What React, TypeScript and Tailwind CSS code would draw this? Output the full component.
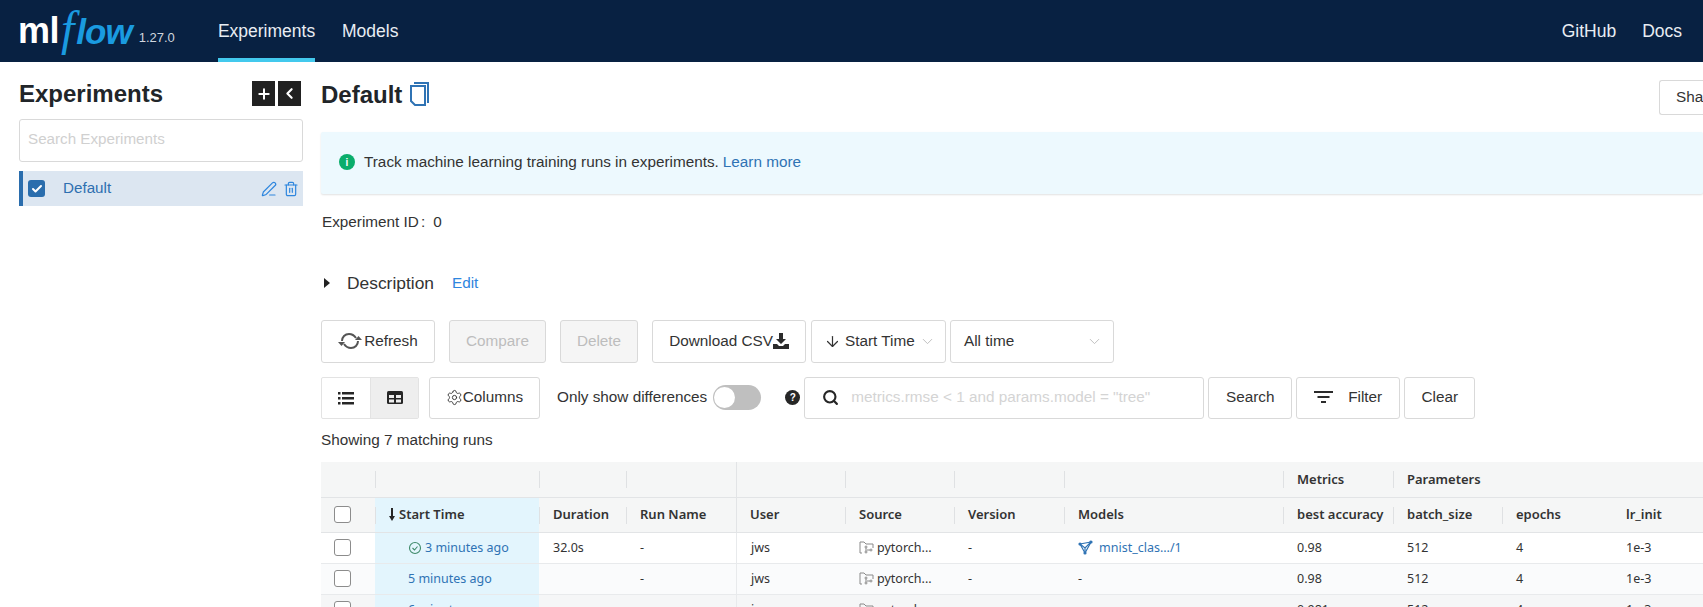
import { ChevronDown, ArrowDown, Plus, ChevronLeft, PenLine, Trash2, Search, Settings, Check } from "lucide-react";

const sans = "font-['Liberation_Sans',Arial,sans-serif]";
const tableFont = "font-['Noto_Sans',sans-serif]";

const btn = "flex h-[43px] items-center justify-center rounded-[3px] border border-[#d9d9d9] bg-white text-[15.3px] text-[#333]";
const btnDisabled = "flex h-[43px] items-center justify-center rounded-[3px] border border-[#d9d9d9] bg-[#f5f5f5] text-[15.3px] text-[#bdbdbd]";

const Logo = () => (
  <div className="flex w-[218px] items-center pl-[18px]">
    <span className="text-[36px] leading-none font-bold tracking-[-0.5px] text-white">ml</span>
    <span className="mb-[5px] ml-[2px] font-['Liberation_Serif',serif] text-[48px] leading-none text-[#1a9be0] italic">f</span>
    <span className="ml-[2px] text-[35px] leading-none font-bold tracking-[-1px] text-[#1a9be0] italic">low</span>
    <span className="mt-[13px] ml-[7px] text-[13px] text-[#cfd6de]">1.27.0</span>
  </div>
);

const Header = () => (
  <div className="flex h-[62px] shrink-0 items-stretch bg-[#082142] text-[17.5px] text-[#e8edf3]">
    <Logo />
    <div className="flex h-full w-[97px] items-center justify-center border-b-[4px] border-[#43c9ed] pt-[4px]">Experiments</div>
    <div className="ml-[27px] flex items-center">Models</div>
    <div className="ml-auto flex items-center gap-[26px] pr-[21px]">
      <span>GitHub</span>
      <span>Docs</span>
    </div>
  </div>
);

const Sidebar = () => (
  <div className="flex w-[321px] shrink-0 flex-col pt-[19px] pl-[19px]">
    <div className="flex h-[25px] w-[284px] items-center justify-between pr-[2px]">
      <span className="text-[24px] font-bold text-[#212529]">Experiments</span>
      <div className="flex gap-[3px]">
        <div className="flex h-[25px] w-[23px] items-center justify-center bg-[#212121] text-white"><Plus size={16} strokeWidth={3} /></div>
        <div className="flex h-[25px] w-[23px] items-center justify-center bg-[#212121] text-white"><ChevronLeft size={17} strokeWidth={3} /></div>
      </div>
    </div>
    <div className="mt-[13px] flex h-[43px] w-[284px] items-center rounded-[3px] border border-[#d9d9d9] px-[8px] pb-[3px] text-[15.2px] text-[#d0d0d0]">Search Experiments</div>
    <div className="mt-[9px] flex h-[35px] w-[284px] items-center border-l-[4px] border-[#2a6dad] bg-[#dce6f1] pr-[4px] pl-[5px]">
      <div className="flex h-[17px] w-[17px] items-center justify-center rounded-[3px] bg-[#2a6dad] text-white"><Check size={12} strokeWidth={4} /></div>
      <span className="ml-[18px] text-[15.2px] text-[#2e6fb0]">Default</span>
      <PenLine className="mr-[6px] ml-auto text-[#2e86de]" size={16} strokeWidth={1.800} />
      <Trash2 className="text-[#2e86de]" size={16} strokeWidth={1.800} />
    </div>
  </div>
);

const CopyIcon = () => (
  <svg width="20" height="24" viewBox="0 0 20 24" fill="none" stroke="#2f73b4" strokeWidth="2">
    <path d="M5 1h14v20" />
    <path d="M2 4h14v19H6l-4-4z" />
  </svg>
);

const RefreshIcon = () => (
  <svg width="24" height="18" viewBox="0 0 24 18" fill="none" stroke="#555" strokeWidth="2">
    <path d="M4 9c0-4 3-7 7-7 3 0 5 1 7 4" />
    <path d="M20 9c0 4-3 7-7 7-3 0-5-1-7-4" />
    <path d="M0 10h7l-3.500 4z" fill="#555" stroke="none" />
    <path d="M17 8h7l-3.500-4z" fill="#555" stroke="none" />
  </svg>
);

const DownloadIcon = () => (
  <svg width="16" height="16" viewBox="0 0 16 16" fill="#2b2b2b">
    <path d="M6 0h4v6h3l-5 5-5-5h3z" />
    <path d="M0 11h4l2 2h4l2-2h4v5H0z" />
  </svg>
);

const ListIcon = () => (
  <svg width="16" height="14" viewBox="0 0 16 14" fill="#262626">
    <rect x="0" y="1" width="2.500" height="2.500" /><rect x="4" y="1" width="12" height="2.500" />
    <rect x="0" y="6" width="2.500" height="2.500" /><rect x="4" y="6" width="12" height="2.500" />
    <rect x="0" y="11" width="2.500" height="2.500" /><rect x="4" y="11" width="12" height="2.500" />
  </svg>
);

const TableIcon = () => (
  <svg width="16" height="13" viewBox="0 0 16 13">
    <rect width="16" height="13" rx="1.500" fill="#262626" />
    <rect x="2" y="4" width="5" height="3" fill="#eee" /><rect x="9" y="4" width="5" height="3" fill="#eee" />
    <rect x="2" y="8.500" width="5" height="3" fill="#eee" /><rect x="9" y="8.500" width="5" height="3" fill="#eee" />
  </svg>
);

// triangle of nodes, same as the registered model mark
const ModelIcon = () => (
  <svg width="16" height="15" viewBox="0 0 16 15" fill="none" stroke="#2f73b4" strokeWidth="1.200">
    <path d="M2 4l11-2-6 11z" />
    <path d="M2 4l5 4 6-6M7 8v5" />
    <circle cx="2" cy="4" r="1" fill="#2f73b4" />
    <circle cx="13" cy="2" r="1" fill="#2f73b4" />
    <circle cx="7" cy="13" r="1" fill="#2f73b4" />
  </svg>
);

const SourceIcon = () => (
  <svg width="15" height="13" viewBox="0 0 15 13" fill="none" stroke="#8a8a8a" strokeWidth="1">
    <path d="M3 12H1V1h4l2 2h7v4" />
    <circle cx="7" cy="6" r="1" /><circle cx="7" cy="11" r="1" /><circle cx="12" cy="9" r="1" />
    <path d="M7 7v3M8 9h3" />
  </svg>
);

const SortArrow = () => (
  <svg width="8" height="13" viewBox="0 0 8 13" fill="#262626" className="mr-[3px] ml-[1px]">
    <rect x="3" y="0" width="2" height="9" />
    <path d="M1 8h6l-3 5z" />
  </svg>
);

const Toolbar = () => (
  <>
    <div className="mt-[25px] flex">
      <div className={`${btn} w-[114px] gap-[2px]`}><RefreshIcon />Refresh</div>
      <div className={`${btnDisabled} ml-[14px] w-[97px]`}>Compare</div>
      <div className={`${btnDisabled} ml-[14px] w-[78px]`}>Delete</div>
      <div className={`${btn} ml-[14px] w-[154px]`}>Download CSV<DownloadIcon /></div>
      <div className={`${btn} ml-[5px] w-[135px] justify-start pl-[12px]`}>
        <ArrowDown size={17} strokeWidth={1.700} />
        <span className="ml-[4px]">Start Time</span>
        <ChevronDown className="mr-[9px] ml-auto text-[#bbb]" size={17} strokeWidth={1.300} />
      </div>
      <div className={`${btn} ml-[4px] w-[164px] justify-start pl-[13px]`}>
        All time
        <ChevronDown className="mr-[10px] ml-auto text-[#bbb]" size={17} strokeWidth={1.300} />
      </div>
    </div>
    <div className="mt-[14px] flex items-center">
      <div className="flex h-[42px] w-[98px] rounded-[2px] border border-[#e3e3e3]">
        <div className="flex w-[48px] items-center justify-center"><ListIcon /></div>
        <div className="flex flex-1 items-center justify-center border-l border-[#e3e3e3] bg-[#eeeeee]"><TableIcon /></div>
      </div>
      <div className={`${btn} ml-[10px] !h-[42px] w-[111px]`}><Settings size={17} strokeWidth={1.300} />Columns</div>
      <span className="ml-[17px] text-[15.3px] text-[#333]">Only show differences</span>
      <div className="ml-[6px] flex h-[25px] w-[48px] items-center rounded-full bg-[#bfbfbf] pl-[1px]">
        <div className="h-[21px] w-[21px] rounded-full bg-white" />
      </div>
      <div className="ml-[24px] flex h-[15px] w-[15px] items-center justify-center rounded-full bg-[#262626] text-[10px] font-bold text-white">?</div>
      <div className="ml-[4px] flex h-[42px] w-[400px] items-center rounded-[3px] border border-[#d9d9d9] pl-[17px]">
        <Search size={17} strokeWidth={3} className="text-[#262626]" />
        <span className="ml-[12px] text-[15.3px] text-[#d4d4d4]">metrics.rmse &lt; 1 and params.model = "tree"</span>
      </div>
      <div className={`${btn} ml-[4px] !h-[42px] w-[84px]`}>Search</div>
      <div className={`${btn} ml-[4px] !h-[42px] w-[104px] gap-[15px]`}>
        <svg width="19" height="13" viewBox="0 0 19 13" fill="#2b2b2b">
          <rect width="19" height="2" /><rect x="3.500" y="5" width="12" height="2" /><rect x="7" y="10" width="5" height="2" />
        </svg>
        Filter
      </div>
      <div className={`${btn} ml-[4px] !h-[42px] w-[71px]`}>Clear</div>
    </div>
    <div className="mt-[12px] text-[15.3px] leading-[17px] text-[#333]">Showing 7 matching runs</div>
  </>
);

const columns = [
  { name: "", w: "w-[54px]" },
  { name: "Start Time", w: "w-[164px]" },
  { name: "Duration", w: "w-[87px]" },
  { name: "Run Name", w: "w-[110px]" },
  { name: "User", w: "w-[109px]" },
  { name: "Source", w: "w-[109px]" },
  { name: "Version", w: "w-[110px]" },
  { name: "Models", w: "w-[219px]" },
  { name: "best accuracy", w: "w-[110px]" },
  { name: "batch_size", w: "w-[109px]" },
  { name: "epochs", w: "w-[110px]" },
  { name: "lr_init", w: "w-[91px]" },
];

const groups = ["", "", "", "", "", "", "", "", "Metrics", "Parameters", "", ""];

const rows = [
  { time: "3 minutes ago", ok: true, duration: "32.0s", model: "mnist_clas.../1", acc: "0.98", bg: "bg-white" },
  { time: "5 minutes ago", ok: false, duration: "", model: "-", acc: "0.98", bg: "bg-[#fafbfc]" },
  { time: "6 minutes ago", ok: false, duration: "", model: "", acc: "0.981", bg: "bg-[#f5f6f7]" },
];

const Box = () => <div className="ml-[13px] h-[17px] w-[17px] rounded-[3px] border border-[#8c8c8c] bg-white" />;

const cell = "flex shrink-0 items-center overflow-hidden whitespace-nowrap pl-[14px]";
const sep = "h-[17px] w-px shrink-0 bg-[#dfe1e3]";

const RunsTable = () => (
  <div className={`mt-[14px] w-[1382px] text-[13px] text-[#333] ${tableFont}`}>
    <div className="flex h-[36px] border-b border-[#e2e4e6] bg-[#f5f6f6] font-semibold">
      {columns.map((c, i) => (
        <div key={i} className={`${c.w} ${cell} relative`}>
          {groups[i]}
          {i > 0 && i < 10 && <div className={`absolute top-[9px] left-0 ${sep}`} />}
          {i === 4 && <div className="absolute top-0 left-0 h-full w-px bg-[#e2e4e6]" />}
        </div>
      ))}
    </div>
    <div className="flex h-[35px] border-b border-[#e2e4e6] bg-[#f5f6f6] font-semibold">
      {columns.map((c, i) => (
        <div key={i} className={`${c.w} ${cell} relative ${i === 1 ? "bg-[#e3f5fd] !pl-[12px]" : ""} ${i === 0 ? "!pl-0" : ""}`}>
          {i === 0 ? <Box /> : i === 1 ? <><SortArrow />{c.name}</> : c.name}
          {i > 0 && i < 11 && <div className={`absolute top-[9px] left-0 ${sep}`} />}
          {i === 4 && <div className="absolute top-0 left-0 h-full w-px bg-[#e2e4e6]" />}
        </div>
      ))}
    </div>
    {rows.map((r, ri) => (
      <div key={ri} className={`flex h-[31px] border-b border-[#e8eaec] text-[12.5px] ${r.bg}`}>
        <div className={`${columns[0].w} ${cell} !pl-0`}><Box /></div>
        <div className={`${columns[1].w} ${cell} bg-[#e3f5fd] !pl-[33px] text-[#2f73b4]`}>
          {r.ok && <svg width="14" height="14" viewBox="0 0 14 14" fill="none" stroke="#3f8a6a" strokeWidth="1.100" className="mr-[3px]"><circle cx="7" cy="7" r="5.500" /><path d="M4.500 7l2 2 3-3.500" /></svg>}
          {r.time}
        </div>
        <div className={`${columns[2].w} ${cell}`}>{r.duration}</div>
        <div className={`${columns[3].w} ${cell}`}>-</div>
        <div className={`${columns[4].w} ${cell} border-l border-[#e8eaec]`}>jws</div>
        <div className={`${columns[5].w} ${cell} gap-[3px]`}><SourceIcon />pytorch...</div>
        <div className={`${columns[6].w} ${cell}`}>-</div>
        <div className={`${columns[7].w} ${cell} ${r.ok ? "gap-[5px] text-[#2f73b4]" : ""}`}>{r.ok && <ModelIcon />}{r.model}</div>
        <div className={`${columns[8].w} ${cell}`}>{r.acc}</div>
        <div className={`${columns[9].w} ${cell}`}>512</div>
        <div className={`${columns[10].w} ${cell}`}>4</div>
        <div className={`${columns[11].w} ${cell}`}>1e-3</div>
      </div>
    ))}
  </div>
);

const App = () => {
  return (
    <div className={`flex h-[607px] w-[1703px] flex-col overflow-hidden bg-white ${sans}`}>
      <Header />
      <div className="flex min-h-0 flex-1">
        <Sidebar />
        <div className="min-w-0 flex-1">
          <div className="flex items-start pt-[15px]">
            <span className="text-[24px] font-bold text-[#212529]">Default</span>
            <span className="mt-[5px] ml-[7px]"><CopyIcon /></span>
            <div className="mt-[3px] ml-auto flex h-[35px] w-[44px] items-center overflow-hidden rounded-l-[3px] border border-r-0 border-[#d9d9d9] pl-[16px] text-[15.3px] text-[#333]">Share</div>
          </div>
          <div className="mt-[17px] flex h-[62px] items-center rounded-[2px] bg-[#edf9fe] pb-[2px] pl-[18px] text-[15.3px] text-[#333] shadow-[0_1px_2px_rgba(0,0,0,0.12)]">
            <div className="flex h-[16px] w-[16px] items-center justify-center rounded-full bg-[#0aad6b] text-[10px] font-bold text-white">i</div>
            <span className="ml-[9px]">Track machine learning training runs in experiments.</span>
            <span className="ml-[4px] text-[#2f73b4]">Learn more</span>
          </div>
          <div className="mt-[19px] flex pl-[1px] text-[15.3px] leading-[17px] text-[#333]">Experiment ID<span className="mx-[2px]">:</span><span className="ml-[6px]">0</span></div>
          <div className="mt-[42px] flex items-center">
            <div className="ml-[3px] h-0 w-0 border-y-[5px] border-l-[6px] border-y-transparent border-l-[#222]" />
            <span className="ml-[17px] text-[17.4px] leading-[20px] text-[#333]">Description</span>
            <span className="ml-[18px] text-[15.3px] text-[#2e86de]">Edit</span>
          </div>
          <Toolbar />
          <RunsTable />
        </div>
      </div>
    </div>
  );
};

export default App;
